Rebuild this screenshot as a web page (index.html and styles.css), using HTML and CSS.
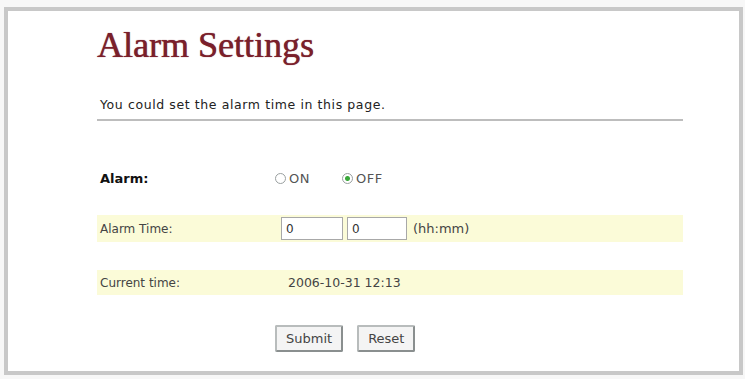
FILE: index.html
```html
<!DOCTYPE html>
<html lang="en">
<head>
    <meta charset="UTF-8">
    <title>Alarm Settings</title>
    <link rel="stylesheet" href="styles.css">
</head>
<body>
    <div class="frame">
        <div class="content">
            <h1 class="title">Alarm Settings</h1>
            <p class="intro">You could set the alarm time in this page.</p>
            <hr class="rule">

            <form class="settings">
                <div class="row row-first">
                    <span class="label label-bold">Alarm:</span>
                    <span class="value">
                        <label class="opt"><input type="radio" name="alarm" class="radio">ON</label>
                        <label class="opt"><input type="radio" name="alarm" class="radio" checked>OFF</label>
                    </span>
                </div>
                <div class="row row-hl">
                    <span class="label">Alarm Time:</span>
                    <span class="value">
                        <input type="text" class="field" value="0">
                        <input type="text" class="field" value="0">
                        <span class="hint">(hh:mm)</span>
                    </span>
                </div>
                <div class="row row-hl row-time">
                    <span class="label">Current time:</span>
                    <span class="value value-time">2006-10-31 12:13</span>
                </div>
                <div class="buttons">
                    <button type="button" class="btn">Submit</button>
                    <button type="reset" class="btn">Reset</button>
                </div>
            </form>
        </div>
    </div>
</body>
</html>
```

FILE: styles.css
```css
body {
    margin: 0;
    padding: 7px 2px 4px 4px;
    background-color: #f7f7f7;
    font-family: 'DejaVu Sans', Verdana, sans-serif;
    font-size: 12px;
    color: #333;
}

.frame {
    height: 360px;
    border: 4px solid #c8c8c8;
    background-color: #fff;
}

.content {
    width: 586px;
    padding: 14px 0 0 89px;
}

.title {
    margin: 0;
    font-family: 'Liberation Serif', 'Times New Roman', serif;
    font-size: 36px;
    font-weight: normal;
    line-height: 40px;
    color: #7a1f2b;
    text-shadow: 0 0 1px rgba(122, 31, 43, 0.8), 0.4px 0 0 rgba(122, 31, 43, 0.6);
}

.intro {
    margin: 32px 0 0 3px;
    font-size: 12.5px;
    line-height: 16px;
    letter-spacing: 0.6px;
    color: #222;
}

.rule {
    margin: 6px 0 0 0;
    border: 0;
    border-top: 2px solid #bdbdbd;
}

.settings {
    margin-top: 44px;
}

.row {
    display: flex;
    align-items: center;
    height: 27px;
}

.row-hl {
    background-color: #fbfbd8;
}

.row-first {
    margin-bottom: 23px;
}

.row-time {
    height: 25px;
    margin-top: 28px;
}

.label {
    width: 175px;
    padding-left: 3px;
    color: #444;
}

.label-bold {
    font-size: 13px;
    font-weight: bold;
    color: #111;
}

.value {
    display: flex;
    align-items: center;
}

.value-time {
    padding-left: 13px;
    font-size: 12.5px;
    color: #444;
}

.opt {
    display: flex;
    align-items: center;
    gap: 3px;
    margin-right: 32px;
    font-size: 13px;
    letter-spacing: 0.5px;
    color: #555;
}

.radio {
    appearance: none;
    width: 11px;
    height: 11px;
    margin: 0;
    border: 1px solid #9aa0a0;
    border-radius: 50%;
    background-color: #fff;
}

.radio:checked {
    background: radial-gradient(circle, #3aa83a 0, #3aa83a 2px, #fff 3px);
}

.field {
    width: 52px;
    height: 19px;
    margin: 0 4px 0 6px;
    padding: 1px 4px;
    border: 1px solid #a8a8a8;
    font-family: 'DejaVu Sans', Verdana, sans-serif;
    font-size: 12px;
    color: #333;
}

.field + .field {
    margin-left: 0;
    width: 50px;
}

.hint {
    margin-left: 2px;
    font-size: 13px;
    color: #444;
}

.buttons {
    display: flex;
    gap: 14px;
    margin: 30px 0 0 178px;
}

.btn {
    height: 27px;
    padding: 0 9px;
    border: 2px solid #8a8f8f;
    border-top-color: #b8bcbc;
    border-left-color: #b8bcbc;
    border-radius: 2px;
    background-color: #f4f4f4;
    font-family: 'DejaVu Sans', Verdana, sans-serif;
    font-size: 13px;
    color: #444;
}
```
